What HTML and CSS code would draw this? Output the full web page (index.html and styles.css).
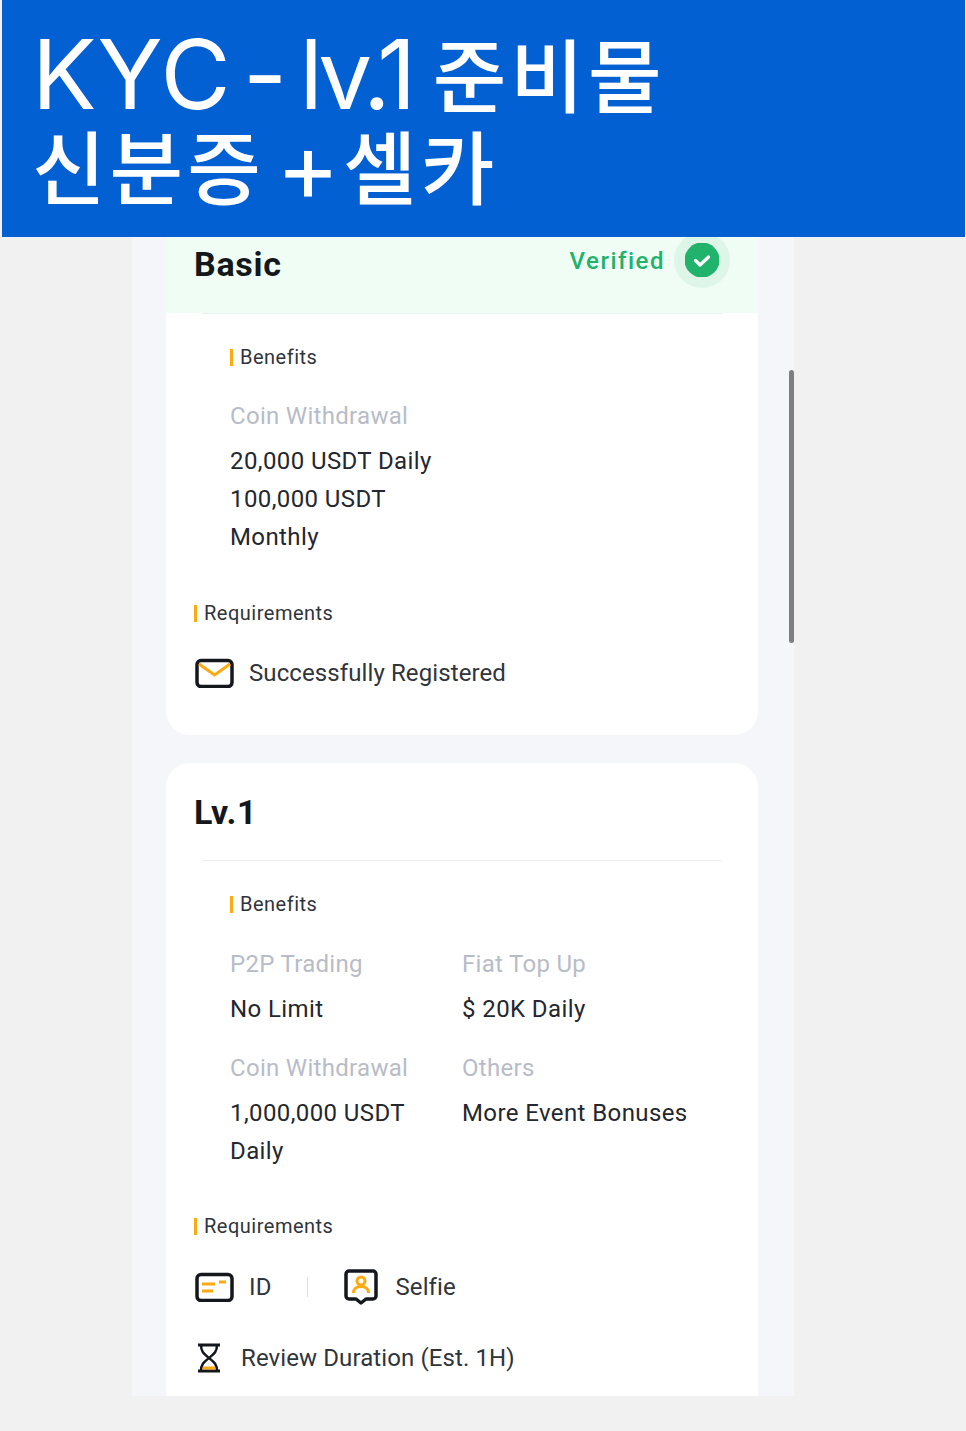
FILE: index.html
```html
<!DOCTYPE html>
<html lang="ko">
<head>
    <meta charset="utf-8">
    <title>KYC - lv.1</title>
    <link rel="stylesheet" href="styles.css">
</head>
<body>
    <header class="banner">
        <h1><span class="latin">KYC</span> <span class="latin">-</span> <span class="latin tight">lv.1</span> 준비물<br>신분증 <span class="latin plus">+</span> 셀카</h1>
    </header>
    <main class="phone">
        <div class="scrollbar"></div>

        <!-- Basic -->
        <section class="card card_basic">
            <div class="card_head head_verified">
                <h2>Basic</h2>
                <div class="verified">
                    <span>Verified</span>
                    <div class="check_ring">
                        <svg width="34" height="34" viewBox="0 0 34 34">
                            <circle cx="17" cy="17" r="17.5" fill="#21b26b"/>
                            <path d="M10.5 17.5l4.5 4.5 8.5-8" fill="none" stroke="#fff" stroke-width="3.2" stroke-linecap="round" stroke-linejoin="round"/>
                        </svg>
                    </div>
                </div>
            </div>
            <div class="card_rule"></div>
            <h3 class="mark benefits_mark">Benefits</h3>
            <div class="benefit one_col">
                <p class="benefit_label">Coin Withdrawal</p>
                <p class="benefit_value">20,000 USDT Daily<br>100,000 USDT<br>Monthly</p>
            </div>
            <h3 class="mark req_mark">Requirements</h3>
            <div class="req_row">
                <svg class="icon" width="40" height="30" viewBox="0 0 40 30">
                    <rect x="2" y="2.500" width="35" height="26" rx="4" fill="none" stroke="#14171c" stroke-width="3.500"/>
                    <path d="M4 6l15.500 11L35 6" fill="none" stroke="#fcaa11" stroke-width="3"/>
                </svg>
                <span class="req_text">Successfully Registered</span>
            </div>
        </section>

        <!-- Lv.1 -->
        <section class="card card_lv">
            <div class="card_head head_plain">
                <h2>Lv.1</h2>
            </div>
            <div class="card_rule"></div>
            <h3 class="mark benefits_mark">Benefits</h3>
            <div class="benefit_grid">
                <div class="benefit">
                    <p class="benefit_label">P2P Trading</p>
                    <p class="benefit_value">No Limit</p>
                </div>
                <div class="benefit">
                    <p class="benefit_label">Fiat Top Up</p>
                    <p class="benefit_value">$ 20K Daily</p>
                </div>
                <div class="benefit">
                    <p class="benefit_label">Coin Withdrawal</p>
                    <p class="benefit_value">1,000,000 USDT<br>Daily</p>
                </div>
                <div class="benefit">
                    <p class="benefit_label">Others</p>
                    <p class="benefit_value">More Event Bonuses</p>
                </div>
            </div>
            <h3 class="mark req_mark">Requirements</h3>
            <div class="req_row id_row">
                <svg class="icon" width="40" height="30" viewBox="0 0 40 30">
                    <rect x="2" y="2.500" width="35" height="26" rx="4" fill="none" stroke="#14171c" stroke-width="3.500"/>
                    <path d="M7 12h13M7 19h11M24 10h7" fill="none" stroke="#fcaa11" stroke-width="3"/>
                </svg>
                <span class="req_text id_text">ID</span>
                <span class="req_sep"></span>
                <svg class="icon selfie_icon" width="34" height="36" viewBox="0 0 34 36">
                    <path d="M5 2h24a3 3 0 0 1 3 3v22a3 3 0 0 1-3 3h-7l-5 4-5-4H5a3 3 0 0 1-3-3V5a3 3 0 0 1 3-3z" fill="none" stroke="#14171c" stroke-width="3.500" stroke-linejoin="round"/>
                    <circle cx="17" cy="12" r="4" fill="none" stroke="#fcaa11" stroke-width="3"/>
                    <path d="M9.500 24c0-4 3-6.500 7.500-6.500s7.500 2.500 7.500 6.500" fill="none" stroke="#fcaa11" stroke-width="3"/>
                </svg>
                <span class="req_text">Selfie</span>
            </div>
            <div class="req_row review_row">
                <svg class="icon hourglass" width="26" height="30" viewBox="0 0 26 30">
                    <path d="M2 2h22M2 28h22" stroke="#14171c" stroke-width="3" fill="none"/>
                    <path d="M5 2c0 7 3 9 8 13 5-4 8-6 8-13M5 28c0-7 3-9 8-13 5 4 8 6 8 13" fill="none" stroke="#14171c" stroke-width="2.500"/>
                    <path d="M6 26.500h14l-1-3H7z" fill="#fcaa11"/>
                </svg>
                <span class="req_text">Review Duration (Est. 1H)</span>
            </div>
        </section>
    </main>
</body>
</html>
```

FILE: styles.css
```css
* {
    box-sizing: border-box;
}
html, body {
    margin: 0;
    padding: 0;
}
body {
    height: 1431px;
    overflow: hidden;
    background: #f1f1f1;
    font-family: Roboto, "Noto Sans CJK KR", sans-serif;
}
h1, h2, h3, p {
    margin: 0;
    font-weight: normal;
}
.banner {
    height: 237px;
    margin: 0 1px 0 2px;
    padding: 25px 0 0 30px;
    background: #0360d3;
}
.banner h1 {
    color: #fff;
    font-family: "Noto Sans CJK KR", sans-serif;
    font-size: 80px;
    font-weight: 500;
    line-height: 92px;
    letter-spacing: 4px;
    word-spacing: -15px;
    white-space: nowrap;
}
.latin {
    font-family: Inter, sans-serif;
    font-size: 96px;
    font-weight: 400;
    letter-spacing: 1px;
    line-height: 0;
    vertical-align: -3px;
}
.tight {
    margin-right: 10px;
    letter-spacing: -5px;
}
.plus {
    margin-right: -9px;
}
.phone {
    position: relative;
    width: 662px;
    height: 1159px;
    margin-left: 132px;
    padding: 0 36px 0 34px;
    background: #f5f6fa;
    overflow: hidden;
}
.scrollbar {
    position: absolute;
    top: 133px;
    right: 0;
    width: 5px;
    height: 273px;
    border-radius: 3px;
    background: #7f7f7f;
}
.card {
    background: #fff;
    border-radius: 24px;
    overflow: hidden;
}
.card_basic {
    height: 498px;
    border-radius: 0 0 24px 24px;
}
.card_lv {
    margin-top: 28px;
    height: 700px;
}
.card_head {
    display: flex;
    justify-content: space-between;
    padding: 0 28px;
}
.head_verified {
    height: 76px;
    background: #f0fdf5;
}
.head_plain {
    height: 97px;
    align-items: center;
}
.card_head h2 {
    color: #14171c;
    font-size: 34px;
    font-weight: 700;
    letter-spacing: .7px;
    line-height: 54px;
}
.verified {
    display: flex;
    align-items: flex-start;
    color: #21b26b;
    font-size: 24px;
    font-weight: 500;
    letter-spacing: 1.500px;
    line-height: 48px;
}
.check_ring {
    width: 56px;
    height: 56px;
    margin: -5px 0 0 9px;
    padding: 11px;
    border-radius: 50%;
    background: #ddf6e8;
}
.check_ring svg {
    display: block;
}
.card_rule {
    height: 1px;
    margin: 0 36px;
    background: #eceef2;
}
.mark {
    border-left: 3px solid #fcaa11;
    color: #30343b;
    font-size: 20px;
    letter-spacing: .5px;
    height: 17px;
    line-height: 16px;
    padding-left: 7px;
}
.benefits_mark {
    margin: 35px 0 0 64px;
}
.req_mark {
    margin: 0 0 0 28px;
}
.benefit {
    margin-left: 64px;
    padding-top: 31px;
    white-space: nowrap;
}
.one_col {
    height: 239px;
}
.benefit_label {
    color: #b8bcc7;
    font-size: 24px;
    letter-spacing: .3px;
    line-height: 38px;
}
.benefit_value {
    margin-top: 7px;
    color: #24272d;
    font-size: 24px;
    letter-spacing: .4px;
    line-height: 38px;
}
.benefit_grid {
    display: grid;
    grid-template-columns: 296px 1fr;
    grid-template-rows: 104px 200px;
    margin-top: 1px;
}
.benefit_grid .benefit:nth-child(even) {
    margin-left: 0;
}
.req_row {
    display: flex;
    align-items: center;
    height: 40px;
    margin: 31px 0 0 28px;
    color: #30343b;
}
.id_row {
    margin-top: 32px;
}
.req_text {
    font-size: 24px;
    letter-spacing: .1px;
}
.icon {
    flex: none;
    margin: 0 14px 0 1px;
}
.req_sep {
    width: 1px;
    height: 20px;
    margin: 0 35px 0 36px;
    background: #dde1ea;
}
.selfie_icon {
    margin-right: 17px;
}
.hourglass {
    margin: 0 19px 0 2px;
}
```
